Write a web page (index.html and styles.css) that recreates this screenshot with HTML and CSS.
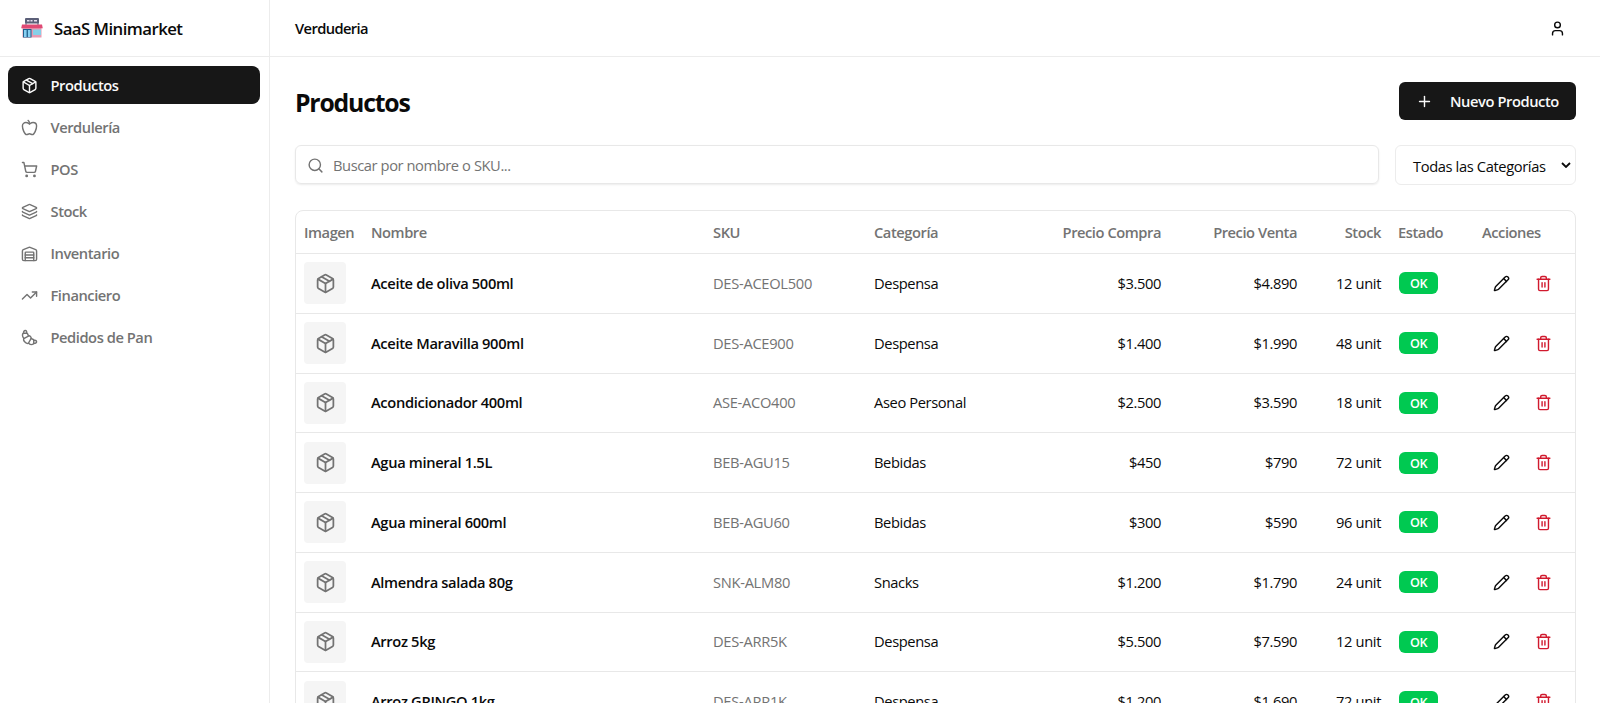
FILE: index.html
```html
<!doctype html>
<html lang="es">
<head>
  <meta charset="UTF-8">
  <title>SaaS Minimarket</title>
  <link rel="stylesheet" href="styles.css">
</head>

<body>

  <!-- icons shared by the menu and the table -->
  <svg class="sprite">
    <symbol id="package" viewBox="0 0 24 24">
      <path d="M11 21.73a2 2 0 0 0 2 0l7-4A2 2 0 0 0 21 16V8a2 2 0 0 0-1-1.73l-7-4a2 2 0 0 0-2 0l-7 4A2 2 0 0 0 3 8v8a2 2 0 0 0 1 1.73z"/>
      <path d="M12 22V12"/>
      <path d="M3.29 7 12 12l8.71-5"/>
      <path d="m7.5 4.27 9 5.15"/>
    </symbol>
    <symbol id="pencil" viewBox="0 0 24 24">
      <path d="M21.174 6.812a1 1 0 0 0-3.986-3.987L3.842 16.174a2 2 0 0 0-.5.83l-1.321 4.352a.5.5 0 0 0 .623.622l4.353-1.32a2 2 0 0 0 .83-.497z"/>
      <path d="m15 5 4 4"/>
    </symbol>
    <symbol id="trash" viewBox="0 0 24 24">
      <path d="M3 6h18"/>
      <path d="M19 6v14a2 2 0 0 1-2 2H7a2 2 0 0 1-2-2V6"/>
      <path d="M8 6V4a2 2 0 0 1 2-2h4a2 2 0 0 1 2 2v2"/>
      <path d="M10 11v6"/>
      <path d="M14 11v6"/>
    </symbol>
  </svg>

  <div class="app">

    <aside class="sidebar">
      <div class="brand">
        <svg class="logo" viewBox="0 0 22 22">
          <path d="M5 5v3M17 5v3" stroke="#8b90a8" stroke-width="1.500"/>
          <rect x="4" y="1" width="14" height="5.500" rx="1" fill="#5b5f78"/>
          <path d="M6 3.700h2.500M9.500 3.700h2M13 3.700h3" stroke="#e8e0ee" stroke-width="1.600"/>
          <rect x="1.500" y="10" width="19" height="10.500" fill="#e79ab2"/>
          <path d="M1 7.500h20l.8 3.700H.2z" fill="#e04a74"/>
          <rect x="2" y="12" width="8.500" height="8.500" fill="#1f5f8b"/>
          <rect x="3" y="13" width="2.600" height="7" fill="#86d0f2"/>
          <rect x="6.900" y="13" width="2.600" height="7" fill="#86d0f2"/>
          <rect x="12" y="12.500" width="8" height="5.500" fill="#86d0e8"/>
        </svg>
        <span class="brandName">SaaS Minimarket</span>
      </div>
      <nav class="menu">
        <a class="menuItem active"><svg class="icon"><use href="#package"/></svg><span>Productos</span></a>
        <a class="menuItem">
          <svg class="icon" viewBox="0 0 24 24"><path d="M12 20.94c1.500 0 2.750 1.060 4 1.060 3 0 6-8 6-12.220A4.910 4.910 0 0 0 17 5c-2.220 0-4 1.440-5 2-1-.56-2.780-2-5-2a4.900 4.900 0 0 0-5 4.780C2 14 5 22 8 22c1.250 0 2.500-1.060 4-1.060Z"/><path d="M10 2c1 .5 2 2 2 5"/></svg>
          <span>Verdulería</span>
        </a>
        <a class="menuItem">
          <svg class="icon" viewBox="0 0 24 24"><circle cx="8" cy="21" r="1"/><circle cx="19" cy="21" r="1"/><path d="M2.050 2.050h2l2.660 12.420a2 2 0 0 0 2 1.580h9.780a2 2 0 0 0 1.950-1.570l1.650-7.430H5.120"/></svg>
          <span>POS</span>
        </a>
        <a class="menuItem">
          <svg class="icon" viewBox="0 0 24 24"><path d="M12.830 2.180a2 2 0 0 0-1.660 0L2.600 6.080a1 1 0 0 0 0 1.830l8.580 3.910a2 2 0 0 0 1.660 0l8.580-3.900a1 1 0 0 0 0-1.830z"/><path d="M2 12a1 1 0 0 0 .58.910l8.600 3.910a2 2 0 0 0 1.650 0l8.580-3.900A1 1 0 0 0 22 12"/><path d="M2 17a1 1 0 0 0 .58.910l8.600 3.910a2 2 0 0 0 1.650 0l8.580-3.900A1 1 0 0 0 22 17"/></svg>
          <span>Stock</span>
        </a>
        <a class="menuItem">
          <svg class="icon" viewBox="0 0 24 24"><path d="M22 8.350V20a2 2 0 0 1-2 2H4a2 2 0 0 1-2-2V8.350A2 2 0 0 1 3.260 6.500l8-3.200a2 2 0 0 1 1.480 0l8 3.200A2 2 0 0 1 22 8.350Z"/><path d="M6 18h12"/><path d="M6 14h12"/><path d="M6 22V11a1 1 0 0 1 1-1h10a1 1 0 0 1 1 1v11"/></svg>
          <span>Inventario</span>
        </a>
        <a class="menuItem">
          <svg class="icon" viewBox="0 0 24 24"><path d="M16 7h6v6"/><path d="m22 7-8.500 8.500-5-5L2 17"/></svg>
          <span>Financiero</span>
        </a>
        <a class="menuItem">
          <svg class="icon" viewBox="0 0 24 24"><path d="m4.600 13.110 5.790-3.210c1.890-1.050 4.790 1.780 3.710 3.710l-3.220 5.810C8.800 23.160.79 15.230 4.600 13.110Z"/><path d="m10.500 9.500-1-2.290C9.200 6.480 8.800 6 8 6H4.500C2.790 6 2 6.500 2 8.500a7.710 7.710 0 0 0 2 4.830"/><path d="M8 6c0-1.550.24-4-2-4-2 0-2.500 2.170-2.500 4"/><path d="m14.500 13.500 2.290 1c.73.3 1.210.7 1.210 1.500v3.500c0 1.710-.5 2.500-2.500 2.500a7.710 7.710 0 0 1-4.830-2"/><path d="M18 16c1.550 0 4-.24 4 2 0 2-2.170 2.500-4 2.500"/></svg>
          <span>Pedidos de Pan</span>
        </a>
      </nav>
    </aside>

    <div class="content">
      <header class="topbar">
        <span class="storeName">Verduderia</span>
        <svg class="icon userIcon" viewBox="0 0 24 24"><circle cx="12" cy="7" r="4"/><path d="M19 21v-2a4 4 0 0 0-4-4H9a4 4 0 0 0-4 4v2"/></svg>
      </header>

      <main class="page">
        <div class="pageHead">
          <h1 class="title">Productos</h1>
          <button class="newButton">
            <svg class="icon" viewBox="0 0 24 24"><path d="M5 12h14"/><path d="M12 5v14"/></svg>
            <span>Nuevo Producto</span>
          </button>
        </div>

        <div class="filters">
          <label class="search">
            <svg class="icon" viewBox="0 0 24 24"><circle cx="11" cy="11" r="8"/><path d="m21 21-4.340-4.340"/></svg>
            <input class="searchInput" type="text" placeholder="Buscar por nombre o SKU...">
          </label>
          <div class="select">
            <span>Todas las Categorías</span>
            <svg class="chevron" viewBox="0 0 10 6"><path d="M1 1l4 4 4-4"/></svg>
          </div>
        </div>

        <div class="tableBox">
          <table class="products">
            <colgroup>
              <col class="colImage"><col class="colName"><col class="colSku"><col class="colCategory">
              <col class="colCost"><col class="colPrice"><col class="colStock"><col class="colStatus"><col class="colActions">
            </colgroup>
            <thead>
              <tr>
                <th>Imagen</th>
                <th>Nombre</th>
                <th>SKU</th>
                <th>Categoría</th>
                <th class="number">Precio Compra</th>
                <th class="number">Precio Venta</th>
                <th class="number">Stock</th>
                <th>Estado</th>
                <th>Acciones</th>
              </tr>
            </thead>
            <tbody id="rows"></tbody>
          </table>
        </div>
      </main>
    </div>

  </div>

  <script>

    var products = [
      ["Aceite de oliva 500ml", "DES-ACEOL500", "Despensa", "$3.500", "$4.890", 12],
      ["Aceite Maravilla 900ml", "DES-ACE900", "Despensa", "$1.400", "$1.990", 48],
      ["Acondicionador 400ml", "ASE-ACO400", "Aseo Personal", "$2.500", "$3.590", 18],
      ["Agua mineral 1.5L", "BEB-AGU15", "Bebidas", "$450", "$790", 72],
      ["Agua mineral 600ml", "BEB-AGU60", "Bebidas", "$300", "$590", 96],
      ["Almendra salada 80g", "SNK-ALM80", "Snacks", "$1.200", "$1.790", 24],
      ["Arroz 5kg", "DES-ARR5K", "Despensa", "$5.500", "$7.590", 12],
      ["Arroz GRINGO 1kg", "DES-ARR1K", "Despensa", "$1.200", "$1.690", 72]
    ];

    function icon(name){
      return '<svg class="icon"><use href="#' + name + '"/></svg>';
    }

    function productRow(p){
      return '<tr>' +
        '<td><div class="thumb">' + icon("package") + '</div></td>' +
        '<td class="name">' + p[0] + '</td>' +
        '<td class="sku">' + p[1] + '</td>' +
        '<td>' + p[2] + '</td>' +
        '<td class="number">' + p[3] + '</td>' +
        '<td class="number">' + p[4] + '</td>' +
        '<td class="number stock">' + p[5] + ' unit</td>' +
        '<td><span class="badge">OK</span></td>' +
        '<td><div class="actions"><a class="action">' + icon("pencil") + '</a>' +
        '<a class="action delete">' + icon("trash") + '</a></div></td>' +
        '</tr>';
    }

    document.getElementById("rows").innerHTML = products.map(productRow).join("");

  </script>

</body>
</html>
```
FILE: styles.css
```css
html, body {
  height: 100%;
  margin: 0;
  padding: 0;
  overflow: hidden;
}
body {
  background-color: #fff;
  color: #0a0a0a;
  font-family: "Segoe UI", "Open Sans", sans-serif;
  font-size: 14.7px;
  line-height: 21px;
  letter-spacing: -0.38px;
}
* {
  box-sizing: border-box;
}
.sprite {
  display: none;
}
.icon {
  width: 17px;
  height: 17px;
  flex: none;
  fill: none;
  stroke: currentColor;
  stroke-width: 2;
  stroke-linecap: round;
  stroke-linejoin: round;
}
.app {
  display: flex;
  height: 100%;
}

/* left menu */
.sidebar {
  width: 270px;
  flex: none;
  border-right: 1px solid #ececec;
}
.brand {
  display: flex;
  align-items: center;
  gap: 11px;
  height: 57px;
  padding-left: 21px;
  border-bottom: 1px solid #ececec;
}
.logo {
  width: 22px;
  height: 22px;
}
.brandName {
  font-size: 16.8px;
  font-weight: 600;
  letter-spacing: -0.55px;
}
.menu {
  display: flex;
  flex-direction: column;
  gap: 4px;
  padding: 9px 9px 0 8px;
}
.menuItem {
  display: flex;
  align-items: center;
  gap: 12.5px;
  height: 38px;
  padding-left: 13px;
  border-radius: 8px;
  color: #737373;
  font-weight: 600;
  letter-spacing: -0.45px;
}
.menuItem.active {
  background-color: #171717;
  color: #fafafa;
}

/* top bar and page */
.content {
  flex: 1;
  min-width: 0;
}
.topbar {
  display: flex;
  align-items: center;
  justify-content: space-between;
  height: 57px;
  padding: 0 34.500px 0 25px;
  border-bottom: 1px solid #ececec;
}
.storeName {
  font-weight: 600;
  letter-spacing: -0.6px;
}
.page {
  padding: 25px 24px 0 25px;
}
.pageHead {
  display: flex;
  align-items: center;
  justify-content: space-between;
  height: 38px;
}
.title {
  margin: 0;
  padding-top: 2px;
  font-size: 24.8px;
  font-weight: 700;
  letter-spacing: -1.2px;
}
.newButton {
  display: flex;
  align-items: center;
  gap: 17px;
  width: 177px;
  height: 38px;
  padding: 1px 0 0 17px;
  border: 0;
  border-radius: 6px;
  background-color: #171717;
  color: #fafafa;
  font: inherit;
  font-weight: 600;
  letter-spacing: -0.42px;
}
.filters {
  display: flex;
  gap: 16px;
  margin-top: 25px;
}
.search {
  display: flex;
  align-items: center;
  gap: 9px;
  flex: 1;
  height: 39px;
  padding: 1px 0 0 11px;
  border: 1px solid #e8e8e8;
  border-radius: 6px;
  box-shadow: 0 1px 2px rgba(0, 0, 0, 0.08);
  color: #737373;
}
.searchInput {
  flex: 1;
  padding: 0;
  border: 0;
  outline: 0;
  background: none;
  font: inherit;
  letter-spacing: -0.42px;
}
.searchInput::placeholder {
  color: #737373;
}
.select {
  display: flex;
  align-items: center;
  justify-content: space-between;
  width: 181px;
  height: 40px;
  padding: 2px 4px 0 17px;
  border: 1px solid #ececec;
  border-radius: 6px;
}
.chevron {
  width: 10px;
  height: 6px;
  margin-bottom: 2px;
  fill: none;
  stroke: #0a0a0a;
  stroke-width: 1.8;
}

/* products table */
.tableBox {
  margin-top: 25px;
  border: 1px solid #e8e8e8;
  border-radius: 8px;
}
.products {
  width: 100%;
  table-layout: fixed;
  border-collapse: separate;
  border-spacing: 0;
}
.colImage { width: 67px; }
.colName { width: 342px; }
.colSku { width: 161px; }
.colCategory { width: 162px; }
.colCost { width: 142px; }
.colPrice { width: 136px; }
.colStock { width: 84px; }
.colStatus { width: 84px; }
th, td {
  padding: 0 8px;
  border-bottom: 1px solid #e8e8e8;
  text-align: left;
  white-space: nowrap;
}
th {
  height: 43px;
  padding-top: 1px;
  color: #737373;
  font-weight: 600;
  letter-spacing: -0.45px;
}
td {
  height: 59.75px;
}
.number {
  padding-right: 9px;
  text-align: right;
}
.name {
  font-weight: 600;
  letter-spacing: -0.35px;
}
.sku {
  color: #737373;
  letter-spacing: -0.3px;
}
.thumb {
  display: flex;
  align-items: center;
  justify-content: center;
  width: 42px;
  height: 42px;
  border-radius: 4px;
  background-color: #f5f5f5;
  color: #737373;
}
.thumb .icon {
  width: 21px;
  height: 21px;
}
.badge {
  display: block;
  width: 39px;
  height: 22px;
  margin-left: 1px;
  border-radius: 6px;
  background-color: #00c951;
  color: #fff;
  font-size: 12.6px;
  font-weight: 600;
  line-height: 23px;
  text-align: center;
}
.actions {
  display: flex;
  gap: 4px;
}
.action {
  display: flex;
  align-items: center;
  justify-content: center;
  width: 38px;
  height: 38px;
}
.delete {
  color: #d11a2e;
}
```
